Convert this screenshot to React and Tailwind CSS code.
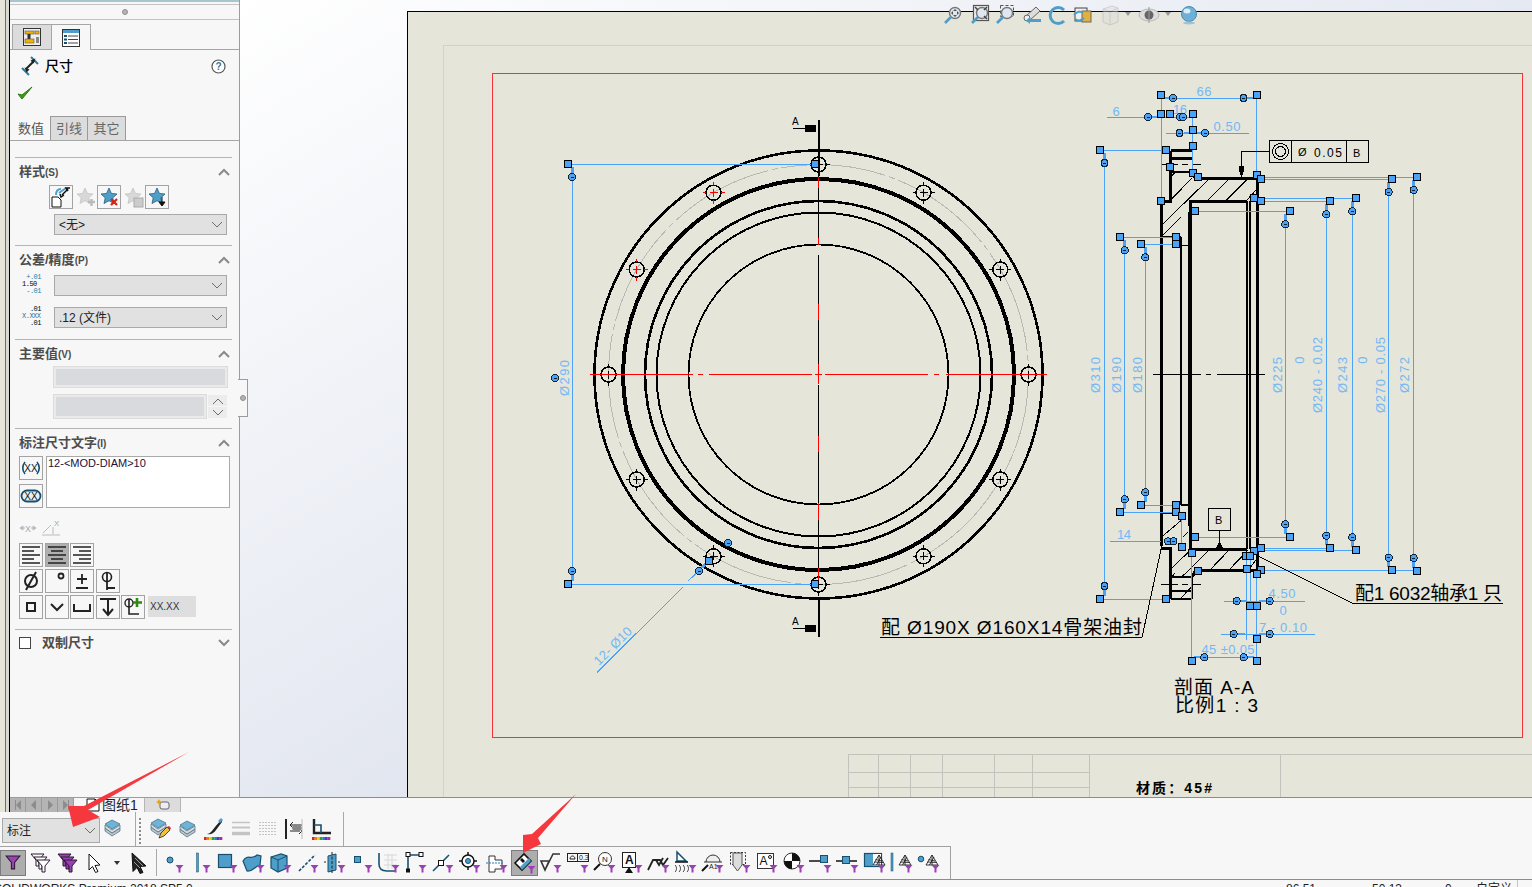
import React from 'react';

const SANS = "font-['Liberation_Sans','Noto_Sans_CJK_SC',sans-serif]";
const B = '#4f9ec9';
const D = '#17506f';
const P = '#9b3fb5';
const DIM = '#4aa3f7';

// ---------- drawing helpers (page coordinates) ----------
const Sq = ({ x, y }) => <rect x={x - 3.5} y={y - 3.5} width="7" height="7" fill="#4aa3f7" stroke="#000" strokeWidth="1" />;
const Rd = ({ x, y }) => (
  <g>
    <circle cx={x} cy={y} r="3.5" fill="#4aa3f7" stroke="#123" strokeWidth="1" />
    <line x1={x - 1.5} y1={y} x2={x + 1.5} y2={y} stroke="#123" strokeWidth="1" />
  </g>
);
const L = ({ d, w = 1, c = '#000' }) => <path d={d} fill="none" stroke={c} strokeWidth={w} />;
const DimLine = ({ d, w = 1 }) => <path d={d} fill="none" stroke={DIM} strokeWidth={w} />;
const DimText = ({ x, y, r, len, children }) => (
  <text
    x={x}
    y={y}
    textAnchor="middle"
    textLength={len}
    transform={r ? `rotate(${r} ${x} ${y})` : undefined}
    className="fill-[#74b8f5] text-[13px] font-['Liberation_Sans',sans-serif]"
  >
    {children}
  </text>
);
const Note = ({ x, y, len, size = 19, children }) => (
  <text x={x} y={y} textLength={len} className="fill-black font-['Liberation_Sans','Noto_Sans_CJK_SC',sans-serif]" fontSize={size}>
    {children}
  </text>
);

const CX = 818.5;
const CY = 374.5;
const holes = Array.from({ length: 12 }, (_, i) => {
  const a = (i * 30 * Math.PI) / 180;
  return { x: CX + 210 * Math.cos(a), y: CY + 210 * Math.sin(a), red: i === 7 || i === 8 };
});

function Hole({ x, y, red }) {
  const c = red ? '#f00' : '#000';
  return (
    <g>
      <circle cx={x} cy={y} r="7.5" fill="none" stroke="#000" strokeWidth="1.6" />
      <L c={c} d={`M${x - 11} ${y}h3.5M${x + 7.5} ${y}h3.5M${x} ${y - 11}v3.5M${x} ${y + 7.5}v3.5M${x - 4} ${y}h8M${x} ${y - 4}v8`} />
    </g>
  );
}

function Drawing() {
  const squares = [
    [568, 164], [815, 164], [568, 584], [815, 584], [709, 561],
    [1160.5, 94.5], [1256.5, 94.5], [1160.5, 113.5], [1169.5, 113.5], [1192.5, 113.5], [1192.5, 129.5], [1192.5, 146],
    [1165.5, 150], [1099.5, 150], [1169.5, 167], [1192.5, 173], [1197.5, 177], [1256.5, 175], [1260.5, 179],
    [1392.3, 179.3], [1417.3, 177.3], [1330.3, 201.3], [1356, 198.3], [1260.5, 201], [1254.3, 198.3],
    [1290.3, 211.3], [1195.3, 211.3], [1120.3, 237.3], [1141.3, 244.3], [1176.3, 237.3], [1176.3, 244.3], [1160.5, 201],
    [1176.3, 505.3], [1176.3, 512.3], [1120.3, 512.3], [1141.3, 505.3], [1181.5, 516], [1181.5, 546.5], [1195.3, 537.3], [1290.3, 537.3],
    [1330.3, 548.3], [1356.3, 550.3], [1260.5, 548.3], [1254.3, 551], [1245.5, 555.5], [1249.5, 555.5], [1191.5, 553.3],
    [1246.5, 569], [1197.5, 571.3], [1260.5, 570.3], [1256.5, 574.3], [1392.3, 570.3], [1417.3, 571.3],
    [1165.5, 599], [1099.5, 599], [1249.5, 605.5], [1256.5, 605.5], [1256.5, 638.5], [1191.5, 661], [1256.5, 661],
  ];
  const rounds = [
    [572, 177], [572, 571], [555, 378], [699, 571], [728, 543],
    [1173, 98], [1243.5, 98], [1148, 117], [1180, 117], [1183, 117], [1179.5, 133], [1205, 133],
    [1104.5, 163], [1104.5, 586], [1124.7, 250.3], [1124.7, 499.3], [1145.3, 257.3], [1145.3, 492.3],
    [1285.3, 224.3], [1285.3, 524.3], [1326.3, 214.3], [1326.3, 535.7], [1352.3, 211.3], [1352.3, 537.3],
    [1388.7, 192], [1388.7, 557.7], [1413.7, 190], [1413.7, 558],
    [1168, 541.3], [1173.5, 541.3], [1236.7, 601], [1269.7, 601], [1233.7, 634], [1269.7, 634], [1204.3, 657.3], [1243.7, 657.3],
  ];
  return (
    <svg width="1124" height="785" viewBox="408 12 1124 785" shapeRendering="crispEdges" className="block">
      {/* sheet frame and title block */}
      <L c="#d2d2ca" d="M443 797V45.5H1532" />
      <rect x="492.5" y="73.5" width="1030" height="664" fill="none" stroke="#f4343a" />
      <L c="#c3c3bd" d="M848.5 797V754.5H1532M848.5 772.5H1089M848.5 787.5H1089M878.5 754.5V797M910.5 754.5V797M942.5 754.5V797M994.5 754.5V797M1032.5 754.5V797M1089.5 754.5V797M1280.5 754.5V797" />
      <text x="1136" y="793" textLength="76" className="fill-black text-[14px] font-bold font-['Liberation_Sans','Noto_Sans_CJK_SC',sans-serif]">材质：45#</text>

      {/* front view */}
      <circle cx={CX} cy={CY} r="224" fill="none" stroke="#000" strokeWidth="2.6" />
      <circle cx={CX} cy={CY} r="210" fill="none" stroke="#b9b9b2" strokeWidth="1" strokeDasharray="105 4 6 4" />
      <circle cx={CX} cy={CY} r="195.5" fill="none" stroke="#000" strokeWidth="4" />
      <circle cx={CX} cy={CY} r="173.5" fill="none" stroke="#000" strokeWidth="2.6" />
      <circle cx={CX} cy={CY} r="162" fill="none" stroke="#000" strokeWidth="2" />
      <circle cx={CX} cy={CY} r="130" fill="none" stroke="#000" strokeWidth="1.8" />
      {holes.map((h, i) => <Hole key={i} {...h} />)}
      <L w="2" d="M818.5 120V176M818.5 600V637" />
      <L w="1" d="M818.5 176V238M818.5 255V304M818.5 320V364M818.5 385V436M818.5 452V503M818.5 520V568" />
      <L w="1" c="#f00" d="M590 374.5H693M698 374.5H703M709 374.5H812M815 374.5H822M825 374.5H928M934 374.5H939M946 374.5H1047" />
      <L w="1" c="#f00" d="M818.5 177V188M818.5 238V245M818.5 304V320M818.5 364V384M818.5 436V452M818.5 503V520M818.5 568V580" />
      <L d="M793 128.5H805M793 628.5H805" />
      <path d="M805 125h11v7h-11zM805 625h11v7h-11z" fill="#000" />
      <text x="792" y="125" className="fill-black text-[10px] font-['Liberation_Sans',sans-serif]">A</text>
      <text x="792" y="625" className="fill-black text-[10px] font-['Liberation_Sans',sans-serif]">A</text>

      {/* front view dimensions */}
      <DimLine d="M568 164.5H815M572.5 177V572M568 584.5H815" />
      <DimLine d="M597 672.5L683 587M688 581L700 570" />
      <DimLine w="2.5" d="M572.5 167V174M572.5 574V581M701 568L707 563" />
      <DimText x="569" y="378" r="-90" len="36">Ø290</DimText>
      <DimText x="616" y="649" r="-45" len="48">12- Ø10</DimText>

      {/* section view outline */}
      <L w="3" d="M1192.5 171.5L1195.5 178.5H1257V570.5H1195.5L1192.5 577M1161.5 546V201.5H1170.5V150.5M1170.5 599V548H1161.5" />
      <L w="2.5" d="M1170.5 150.5H1192M1170.5 158.5H1192M1170.5 172H1192M1170.5 577H1192M1170.5 591H1192M1170.5 599H1192" />
      <L w="1" d="M1192.5 150V172M1192.5 577V599" />
      <L w="3" d="M1190.5 549V201H1247M1190.5 549H1247" />
      <L w="2" d="M1246.5 201V549M1250 201V549M1181 237V505M1188.5 212V526M1188.5 212H1191M1181 505H1189" />
      <L w="1.5" d="M1162 236.5H1181M1181 245.5H1188M1162 513H1181" />
      <L d="M1170.7 200L1191.7 178.3M1161.7 225L1208 180M1208 200L1228 180M1226.7 200L1246.7 180M1161.7 206.7L1167.3 200.7M1170.7 176.7L1175 172.7M1163 235L1181 217M1247 200L1256 190" />
      <L d="M1170.7 569L1191.7 549M1182 576.7L1209 550M1210 570L1229 550M1229 570L1248 550M1163 535.7L1181.7 520M1183 537L1188 532M1180 599L1191.7 586.7M1172 577L1175 573M1250 568L1256 560" />
      <L d="M1153 374.5H1201M1206 374.5H1211M1217 374.5H1265M1161 164.5H1178M1182 164.5H1188M1192 164.5H1201M1161 584.5H1178M1182 584.5H1188M1192 584.5H1201" />

      {/* section view dimensions */}
      <DimLine d="M1161 94V200M1256.5 94V178M1161 98.5H1257M1107 117.5H1193M1166 133.5H1249M1192.5 113V172" />
      <DimLine d="M1100 150.5H1165M1104.5 163V586M1100 599.5H1165" />
      <DimLine d="M1260 177.5H1417M1260 179.5H1392M1388.5 192V558M1413.5 190V558M1260 570.5H1417" />
      <DimLine d="M1254 198.5H1356M1260 201.5H1330M1326.5 214V536M1352.5 211V537M1254 548.5H1330M1254 550.5H1356" />
      <DimLine d="M1195 211.5H1290M1285.5 224V524M1195 537.5H1290" />
      <DimLine d="M1120 237.5H1176M1124.5 250V499M1120 512.5H1176M1141 244.5H1176M1145.5 257V492M1141 505.5H1176" />
      <DimLine d="M1110 541.5H1161M1181.5 516V546M1191.5 553V661M1191.5 657.5H1256M1256.5 574V660" />
      <DimLine d="M1224 601.5H1305M1221 634.5H1315M1246.5 555V605M1250.5 555V605M1246.5 610V640" />
      <DimLine w="2.5" d="M1163 98H1170M1247 98H1254M1152 117H1158M1184 133H1190M1195 133H1201M1104.5 153V160M1124.5 240V247M1145.5 247V254M1285.5 214V221M1326.5 204V211M1352.5 201V208M1388.5 182V189M1413.5 180V187M1104.5 589V596M1124.5 502V509M1145.5 495V502M1285.5 527V534M1326.5 538V545M1352.5 540V547M1388.5 560V567M1413.5 561V568M1240 601H1247M1259 601H1266M1237 634H1245M1259 634H1266M1194 657H1201M1247 657H1254" />
      <DimText x="1204" y="96" len="15">66</DimText>
      <DimText x="1116" y="116" len="7">6</DimText>
      <DimText x="1180" y="114" len="14">16</DimText>
      <DimText x="1227" y="131" len="27">0.50</DimText>
      <DimText x="1124" y="539" len="14">14</DimText>
      <DimText x="1282" y="598" len="27">4.50</DimText>
      <DimText x="1283" y="615" len="7">0</DimText>
      <DimText x="1283" y="632" len="48">7 - 0.10</DimText>
      <DimText x="1228" y="654" len="53">45 ±0.05</DimText>
      <DimText x="1100" y="375" r="-90" len="36">Ø310</DimText>
      <DimText x="1121" y="375" r="-90" len="36">Ø190</DimText>
      <DimText x="1142" y="375" r="-90" len="36">Ø180</DimText>
      <DimText x="1282" y="375" r="-90" len="36">Ø225</DimText>
      <DimText x="1304" y="360" r="-90" len="7">0</DimText>
      <DimText x="1322" y="375" r="-90" len="76">Ø240 - 0.02</DimText>
      <DimText x="1347" y="375" r="-90" len="36">Ø243</DimText>
      <DimText x="1367" y="360" r="-90" len="7">0</DimText>
      <DimText x="1385" y="375" r="-90" len="76">Ø270 - 0.05</DimText>
      <DimText x="1409" y="375" r="-90" len="36">Ø272</DimText>

      {/* tolerance frame and datum */}
      <rect x="1269.5" y="140.5" width="99" height="22" fill="none" stroke="#000" />
      <L d="M1291.5 140.5V162.5M1346.5 140.5V162.5M1269 151.5H1241.5V178" />
      <circle cx="1280.5" cy="151.5" r="8" fill="none" stroke="#000" />
      <circle cx="1280.5" cy="151.5" r="5" fill="none" stroke="#000" />
      <path d="M1239 166h5v3l-1 6h-3l-1-6z" fill="#000" />
      <text x="1298" y="156" className="fill-black text-[11px] font-['Liberation_Sans',sans-serif]">Ø</text>
      <text x="1314" y="156.5" textLength="28" className="fill-black text-[12px] font-['Liberation_Sans',sans-serif]">0.05</text>
      <text x="1353" y="157" className="fill-black text-[11px] font-['Liberation_Sans',sans-serif]">B</text>
      <rect x="1208.5" y="508.5" width="22" height="22" fill="none" stroke="#000" />
      <text x="1215" y="524" className="fill-black text-[11px] font-['Liberation_Sans',sans-serif]">B</text>
      <L d="M1219.5 530V541" />
      <path d="M1219.5 541l4 8h-8z" fill="#000" />

      {/* notes */}
      <Note x="1355" y="600" len="147">配1 6032轴承1 只</Note>
      <L d="M1353 603.5H1503M1353 603.5L1258 556" />
      <Note x="881" y="634" len="261">配 Ø190X Ø160X14骨架油封</Note>
      <L d="M880 637.5H1142L1162 545" />
      <Note x="1174" y="694" len="80">剖面 A-A</Note>
      <Note x="1175" y="712" len="83">比例1 : 3</Note>

      {rounds.map(([x, y], i) => <Rd key={i} x={x} y={y} />)}
      {squares.map(([x, y], i) => <Sq key={i} x={x} y={y} />)}
    </svg>
  );
}

// ---------- small ui helpers ----------
const Chev = ({ up, thin }) => (
  <svg width="12" height="8" viewBox="0 0 12 8">
    <path d={up ? 'M1 7l5-5 5 5' : 'M1 1l5 5 5-5'} fill="none" stroke={thin ? '#6b6b6b' : '#8a8a8a'} strokeWidth={thin ? 1 : 2} />
  </svg>
);

const Star = ({ x = 3, y = 2, fill = B, stroke = D }) => (
  <path transform={`translate(${x} ${y})`} d="M8 0l2.4 5.4 5.6.6-4.2 3.8 1.2 5.7L8 12.7 3 15.5l1.2-5.7L0 6l5.6-.6z" fill={fill} stroke={stroke} strokeWidth="0.7" />
);

const BtnBox = ({ className = '', active, children }) => (
  <div className={`w-6 h-6 shrink-0 flex items-center justify-center border border-[#a3a3a3] ${active ? 'bg-[#b0b0b0]' : ''} ${className}`}>
    <svg width="22" height="22" viewBox="0 0 22 22">{children}</svg>
  </div>
);

const Bare = ({ children }) => (
  <div className="w-6 h-6 shrink-0 flex items-center justify-center">
    <svg width="22" height="22" viewBox="0 0 22 22">{children}</svg>
  </div>
);

const Select = ({ children, className = '' }) => (
  <div className={`ml-[39px] w-[173px] h-[21px] bg-[#e1e1e1] border border-[#a9a9a9] flex items-center justify-between pl-1 pr-[3px] text-[12px] text-[#222] ${className}`}>
    <span>{children}</span>
    <Chev thin />
  </div>
);

function Section({ title, hot, up = true, children }) {
  return (
    <div className="border-t border-[#b4b4b4]">
      <div className="h-[27px] pl-1 pr-[2px] flex items-center justify-between">
        <span className="text-[13px] font-bold text-[#4c4c4c]">{title}<span className="text-[10px]">{hot}</span></span>
        <Chev up={up} />
      </div>
      {children}
    </div>
  );
}

const Ic = ({ w = 27, children }) => (
  <svg width={w} height="26" viewBox={`0 0 ${w} 26`} className="block shrink-0">{children}</svg>
);

const F = () => <path d="M15.5 15h8l-3 3.5v4h-2v-4z" fill={P} />;
const Mesh = ({ x = 0, y = 0 }) => (
  <g transform={`translate(${x} ${y})`} fill="none" stroke="#222" strokeWidth="0.9">
    <path d="M9 2l6 10H3zM5.5 6.5l6.5 1.5M4.5 9l9 .5M9 2v10M6.5 12L11 4" />
  </g>
);

function Funnel({ x = 0, y = 0, fill = P }) {
  return <path transform={`translate(${x} ${y})`} d="M0 0h13l-5 6v6H5V6z" fill={fill} stroke="#2a1a30" strokeWidth="1" />;
}

const filterIcons = [
  <g key="0"><circle cx="10" cy="10" r="3" fill={B} stroke={D} /><F /></g>,
  <g key="1"><rect x="9.5" y="3" width="2" height="19" fill={B} stroke={D} strokeWidth="0.5" /><F /></g>,
  <g key="2"><rect x="4.5" y="4.5" width="13" height="13" fill={B} stroke={D} strokeWidth="1.2" /><F /></g>,
  <g key="3"><path d="M2 11c5-8 8 0 14-6l4 1-1 9c-5 1-7 7-13 6z" fill={B} stroke={D} strokeWidth="1.2" /><F /></g>,
  <g key="4"><path d="M3 7l10-3 6 2v12l-9 4-7-4z" fill={B} stroke={D} strokeWidth="1.2" /><path d="M3 7l7 3 9-4M10 10v12" fill="none" stroke={D} /><F /></g>,
  <g key="5"><path d="M4 21L20 5" stroke={D} strokeWidth="1.6" strokeDasharray="3 1.5" /><F /></g>,
  <g key="6"><path d="M6 6l8-2v16l-8 2z" fill={B} stroke={D} /><path d="M10 2v22M2 12h2M16 12h2" stroke="#222" strokeDasharray="3 1.5" /><F /></g>,
  <g key="7"><rect x="5.5" y="6.5" width="6" height="6" fill={B} stroke={D} /><F /></g>,
  <g key="8"><path d="M8 5h13M8 10h13M8 15h13M12 4v15M16 4v15" stroke="#d8d8d8" /><path d="M3 3v11c0 5 3 7 8 7h8" fill="none" stroke={D} strokeWidth="1.6" /><F /></g>,
  <g key="9"><path d="M5 5v15M5 5h13" stroke={D} strokeWidth="1.6" /><rect x="3" y="2.5" width="4" height="4" fill="#fff" stroke="#111" /><rect x="16" y="2.5" width="4" height="4" fill="#fff" stroke="#111" /><rect x="3" y="18.5" width="4" height="4" fill="#111" /><F /></g>,
  <g key="10"><path d="M3 21L19 5" stroke={D} strokeWidth="1.6" /><rect x="8.5" y="10.5" width="5" height="5" fill="#fff" stroke="#111" /><F /></g>,
  <g key="11"><circle cx="11" cy="11" r="6" fill="#fff" stroke="#111" strokeWidth="1.5" /><circle cx="11" cy="11" r="2.5" fill={B} stroke={D} /><path d="M2 11h3M17 11h3M11 2v3M11 17v3" stroke="#111" strokeWidth="1.5" /><F /></g>,
  <g key="12"><path d="M5 6h6v4h7v9h-7v3H5z" fill="#fff" stroke="#333" /><path d="M2 13h18" stroke="#1f7fc0" strokeDasharray="2 1" /><F /></g>,
  <g key="13"><path d="M3 12l9-9 7 7-9 9z" fill="#fff" stroke="#111" strokeWidth="1.6" /><path d="M8 16l9-9 2 3-9 9z" fill={B} /><path d="M8 9l2-2 3 3-2 2z" fill="#111" /><F /></g>,
  <g key="14"><path d="M3 11h8l-4 9zM7 20l8-16h7" fill="none" stroke="#333" strokeWidth="1.6" /><F /></g>,
  <g key="15"><rect x="2.5" y="3.5" width="21" height="8" fill="none" stroke="#222" /><path d="M12.5 3.5v8" stroke="#222" /><path d="M5 9c0-4 5-4 5 0z" fill="none" stroke="#222" /><text x="14" y="10" className="text-[7px] font-['Liberation_Sans',sans-serif]" fill="#222">0.3</text><F /></g>,
  <g key="16"><circle cx="13" cy="9" r="6.5" fill="#fff" stroke="#333" /><path d="M8 14l-6 6" stroke="#111" strokeWidth="2" /><text x="10" y="12" className="text-[8px] font-['Liberation_Sans',sans-serif]" fill="#222">N</text><F /></g>,
  <g key="17"><rect x="3.5" y="2.5" width="13" height="15" fill="#fff" stroke="#222" /><text x="6" y="14" className="text-[12px] font-bold font-['Liberation_Sans',sans-serif]" fill="#111">A</text><path d="M10 17l4 6H6z" fill="#111" /><F /></g>,
  <g key="18"><path d="M2 20l5-10h7l3 5 5-7M10 10l3 5 4-7" fill="none" stroke="#222" strokeWidth="1.8" /><F /></g>,
  <g key="19"><path d="M4 2v9h9z" fill="#fff" stroke={D} strokeWidth="1.5" /><path d="M2 12h13" stroke="#111" strokeWidth="1.5" /><path d="M2 15c2 2 2 5 0 7M6 15c2 2 2 5 0 7M10 15c2 2 2 5 0 7M14 15c2 2 2 5 0 7" fill="none" stroke="#333" /><F /></g>,
  <g key="20"><path d="M6 12a7 7 0 0114 0" fill="#eee" stroke="#333" /><path d="M8 15l-6 6" stroke="#111" strokeWidth="2" /><path d="M4 12h18" stroke="#333" /><text x="9" y="19" className="text-[7px] font-['Liberation_Sans',sans-serif]" fill="#222">A1</text><F /></g>,
  <g key="21"><rect x="3.5" y="2.5" width="15" height="12" fill="none" stroke="#333" strokeDasharray="2 1.5" /><path d="M6 3h9v12l-4.5 6L6 15z" fill="#ddd" stroke="#555" /><F /></g>,
  <g key="22"><rect x="3.5" y="3.5" width="16" height="15" fill="#fff" stroke="#333" /><text x="5.5" y="15" className="text-[12px] font-['Liberation_Sans',sans-serif]" fill="#111">A</text><circle cx="16" cy="7" r="1.5" fill="none" stroke="#111" /><F /></g>,
  <g key="23"><circle cx="11" cy="11" r="8" fill="#fff" stroke="#333" /><path d="M11 11V3a8 8 0 018 8zM11 11v8a8 8 0 01-8-8z" fill="#111" /><F /></g>,
  <g key="24"><path d="M1 11h12" stroke="#111" strokeWidth="1.5" /><rect x="12.5" y="5.5" width="7" height="7" fill={B} stroke={D} /><F /></g>,
  <g key="25"><path d="M1 11h21" stroke="#111" strokeWidth="1.5" /><rect x="7.5" y="6.5" width="7" height="7" fill={B} stroke={D} /><F /></g>,
  <g key="26"><rect x="2.5" y="3.5" width="17" height="13" fill={B} stroke={D} strokeWidth="1.2" /><rect x="11" y="4" width="8" height="12" fill="#fff" /><Mesh x="8" y="3" /><F /></g>,
  <g key="27"><rect x="2" y="3" width="2" height="18" fill={B} stroke={D} strokeWidth="0.5" /><Mesh x="7" y="3" /><F /></g>,
  <g key="28"><circle cx="5" cy="9" r="2.8" fill={B} stroke={D} /><Mesh x="7" y="3" /><F /></g>,
];

const Rainbow = ({ y = 21 }) => (
  <g>
    {['#e02020', '#f08000', '#f0d000', '#30a030', '#2080d0', '#6030c0', '#a030a0'].map((c, i) => (
      <rect key={c} x={4 + i * 2.6} y={y} width="2.7" height="3" fill={c} />
    ))}
  </g>
);

const Layers = ({ x = 7, y = 5 }) => (
  <g transform={`translate(${x} ${y})`} stroke="#3a6a85" strokeWidth="0.7">
    <path d="M0 8l7 5 8-5v3l-8 5-7-5z" fill="#c4c4c4" />
    <path d="M0 5l7 5 8-5v3l-8 5-7-5z" fill="#dcdcdc" />
    <path d="M0 4l7-4 8 4-8 5z" fill="#6db4d8" />
  </g>
);

const layerIcons = [
  <g key="a"><Layers x="5" y="3" /><path d="M13 22l2-5 6-6 3 3-6 6z" fill="#f0c040" stroke="#222" strokeWidth="0.8" /><path d="M21 11l3 3 1-2-2-2z" fill="#d03030" /></g>,
  <Layers key="b" />,
  <g key="c"><path d="M7 18c3 0 5-3 8-7l6-7c1 0 1 1 1 2l-6 8c-2 3-5 5-9 4z" fill="#222" /><path d="M18 5l3-3 2 2-3 3z" fill={B} /><Rainbow /></g>,
  <g key="d" stroke="#c4c4c4"><path d="M5 6.5h18" strokeWidth="1.5" /><path d="M5 11.5h18" strokeWidth="2" /><path d="M5 17.5h18" strokeWidth="3.5" /></g>,
  <g key="e" stroke="#c4c4c4" strokeDasharray="2 1"><path d="M5 6.5h18M5 9.5h18M5 12.5h18M5 15.5h18M5 18.5h18" strokeWidth="1.2" /></g>,
  <g key="f"><path d="M5 3v20" stroke="#222" strokeWidth="2" /><path d="M9 9h12M9 15h10" stroke="#222" /><path d="M12 6l-3 3 3 3M18 12l3 3-3 3" fill="none" stroke="#222" /><ellipse cx="16" cy="12" rx="5" ry="3.5" fill="#888" /><path d="M21 3v20" stroke="#bbb" /></g>,
  <g key="g"><path d="M6 3v14h17" fill="none" stroke="#222" strokeWidth="2.4" /><path d="M6 9h7v8" fill="none" stroke={D} strokeWidth="1.6" /><Rainbow /></g>,
];

const viewIcons = [
  [953, 'zoomfit'], [980, 'zoomall'], [1005, 'zoomarea'], [1032, 'prev'], [1057, 'rotate'], [1083, 'section'], [1110, 'cube'],
  [1149, 'eye'], [1189, 'globe'],
];

function ViewIcon({ kind }) {
  const glass = <g><circle cx="13" cy="9" r="5.5" fill="#dfe7ee" stroke="#777" strokeWidth="1.4" /><path d="M9 13l-6 6" stroke={B} strokeWidth="2.6" /></g>;
  if (kind === 'zoomfit') return <g>{glass}<path d="M13 5l-2 2h4zM13 13l-2-2h4zM9 9l2-2v4zM17 9l-2-2v4z" fill="#555" /></g>;
  if (kind === 'zoomall') return <g><rect x="4.5" y="1.5" width="15" height="15" fill="#eee" stroke="#555" strokeWidth="1.2" />{glass}<path d="M6 3l3 3M18 3l-3 3M18 15l-3-3" stroke="#444" strokeWidth="1.5" /></g>;
  if (kind === 'zoomarea') return <g><rect x="6.5" y="1.5" width="13" height="11" fill="none" stroke="#555" strokeDasharray="3 2" />{glass}</g>;
  if (kind === 'prev') return <g><path d="M5 12l10-9 4 4-10 9z" fill="#ddd" stroke="#666" /><circle cx="6" cy="14" r="3" fill="#eee" stroke="#666" /><path d="M9 15h11v3H9v2l-4-3.5L9 13z" fill={B} /></g>;
  if (kind === 'rotate') return <path d="M18 6a8 8 0 100 11" fill="none" stroke={B} strokeWidth="3" />;
  if (kind === 'section') return <g><rect x="3" y="4" width="12" height="13" fill="#eee" stroke="#444" /><rect x="10" y="7" width="9" height="11" fill="#e0b040" stroke="#765" /><path d="M2 11c3-4 7-4 9-2M12 14c-3 3-7 3-9 1" fill="none" stroke={B} strokeWidth="2" /></g>;
  if (kind === 'cube') return <g opacity="0.45"><path d="M4 5l9-3 6 2v14l-8 3-7-3z" fill="#ddd" stroke="#aaa" /><path d="M4 5l7 3 8-4M11 8v13" fill="none" stroke="#aaa" /></g>;
  if (kind === 'eye') return <g><ellipse cx="11" cy="11" rx="10" ry="6" fill="#ddd" stroke="#bbb" /><circle cx="11" cy="11" r="4.5" fill="#666" /><path d="M11 3v16" stroke="#999" /></g>;
  return <g><circle cx="11" cy="10" r="7.5" fill="#6fb0d8" stroke="#4a8cb0" /><ellipse cx="9" cy="7" rx="3.5" ry="2.5" fill="#dcecf5" /><ellipse cx="11" cy="19" rx="6" ry="1.5" fill="#a5c0d0" /></g>;
}

const Strip = () => (
  <div className="w-[10px] shrink-0 h-full flex">
    <div className="w-[5px] bg-[#e5e5d9]" />
    <div className="w-px bg-[#6e6e6e]" />
    <div className="w-[3px] bg-[#d9d9d2]" />
    <div className="w-px bg-black" />
  </div>
);

const NavBtn = ({ d }) => (
  <div className="w-4 h-[14px] bg-[#b4b4b4] border-r border-[#9a9a9a] flex items-center justify-center">
    <svg width="10" height="10" viewBox="0 0 10 10"><path d={d} fill="#8c8c8c" /></svg>
  </div>
);

function Panel() {
  return (
    <aside className="w-[230px] shrink-0 h-full bg-[#f7f7f7] border-r border-b border-[#9c9c9c] flex flex-col relative z-10">
      <div className="h-[2px] bg-[#a8c6ce]" />
      <div className="h-[3px] border-b border-[#c4c4c4]" />
      <div className="h-[15px] border-b border-[#c4c4c4] flex items-center justify-center">
        <div className="w-[6px] h-[6px] rounded-full bg-[#b4b4b4] border border-[#8f8f8f]" />
      </div>
      {/* property tabs */}
      <div className="h-[30px] border-b border-[#a6a6a6] flex items-end pl-[2px]">
        <div className="w-[39px] h-[25px] bg-[#dcdcdc] border-t border-l border-[#a6a6a6] flex items-center justify-center">
          <svg width="18" height="18" viewBox="0 0 18 18">
            <rect x="0.5" y="0.5" width="17" height="17" fill="#eee" stroke="#333" />
            <rect x="2" y="3" width="9" height="3" fill="#f0b400" stroke="#654" strokeWidth="0.6" />
            <rect x="12" y="3" width="4" height="3" fill="#f0b400" stroke="#654" strokeWidth="0.6" />
            <path d="M6 6v5" stroke="#333" strokeWidth="3" />
            <rect x="2" y="11" width="9" height="4" fill="#f0b400" stroke="#654" strokeWidth="0.6" />
            <rect x="13" y="9" width="3" height="6" fill="#888" />
          </svg>
        </div>
        <div className="w-[40px] h-[26px] -mb-px bg-[#f7f7f7] border-t border-l border-r border-[#a6a6a6] flex items-center justify-center">
          <svg width="18" height="18" viewBox="0 0 18 18">
            <rect x="0.5" y="0.5" width="17" height="17" fill="#fff" stroke="#333" />
            <rect x="1" y="1" width="16" height="3" fill={B} />
            <path d="M6 7h10M6 10.5h10M6 14h10" stroke="#444" />
            <rect x="2" y="6" width="3" height="2" fill={D} /><rect x="2" y="9.5" width="3" height="2" fill={D} /><rect x="2" y="13" width="3" height="2" fill={D} />
          </svg>
        </div>
      </div>
      {/* title */}
      <div className="mt-[6px] h-[20px] pl-[11px] pr-[13px] flex items-center justify-between">
        <div className="flex items-center gap-[6px]">
          <svg width="18" height="20" viewBox="0 0 18 20">
            <path d="M1 12l7 7M10 1l7 7" stroke="#2d7aa0" strokeWidth="2" />
            <path d="M5 13L13 5" stroke="#222" strokeWidth="2" />
            <path d="M3.5 11.5l2 5 3-3zM14.5 2.5l-5 2 3 3z" fill="#222" />
          </svg>
          <span className="text-[14px] font-medium text-black">尺寸</span>
        </div>
        <svg width="15" height="15" viewBox="0 0 15 15">
          <circle cx="7.5" cy="7.5" r="6.5" fill="#fff" stroke="#555" strokeWidth="1.2" />
          <text x="7.5" y="11" textAnchor="middle" className="text-[10px] font-bold font-['Liberation_Sans',sans-serif]" fill="#2d7aa0">?</text>
        </svg>
      </div>
      <div className="mt-[8px] h-[18px] pl-[7px] flex items-center">
        <svg width="16" height="14" viewBox="0 0 16 14"><path d="M1 8l4 5L15 1 5 9z" fill="#3f9a18" stroke="#2d7a10" strokeWidth="1" /></svg>
      </div>
      {/* sub tabs */}
      <div className="mt-[14px] h-[25px] border-b border-[#a6a6a6] flex pl-[2px] text-[13px] leading-none">
        <div className="w-[38px] flex items-center justify-center text-[#555]">数值</div>
        <div className="w-[38px] bg-[#dcdcdc] border border-b-0 border-[#9a9a9a] flex items-center justify-center text-[#666]">引线</div>
        <div className="w-[38px] bg-[#dcdcdc] border border-l-0 border-b-0 border-[#9a9a9a] flex items-center justify-center text-[#666]">其它</div>
      </div>

      <div className="mt-[16px] ml-[5px] w-[217px]">
        <Section title="样式" hot="(S)">
          <div className="ml-[34px] flex h-6">
            <BtnBox>
              <path d="M2 11h6l3 3v7H2z" fill="#fff" stroke="#111" />
              <path d="M9 7l7-5M6 9c0-4 2-6 5-6" fill="none" stroke={B} strokeWidth="2" />
              <path d="M12 9l6-6M10 8l1 3 3-2M20 2l-4 0 2 3" fill="none" stroke="#111" strokeWidth="1.5" />
            </BtnBox>
            <Bare><Star fill="#d8d8d8" stroke="#c0c0c0" /><path d="M14 16h7M17.5 13v7" stroke="#bbb" strokeWidth="2.4" /></Bare>
            <BtnBox><Star /><path d="M13 13l6 6M19 13l-6 6" stroke="#d82010" strokeWidth="2.2" /></BtnBox>
            <Bare><Star fill="#d8d8d8" stroke="#c0c0c0" /><rect x="12" y="12" width="9" height="9" fill="#ccc" stroke="#aaa" /></Bare>
            <BtnBox><Star /><path d="M16 11v6M13 16h6l-3 4z" fill="#111" stroke="#111" /></BtnBox>
          </div>
          <Select className="mt-[5px] mb-[10px]">&lt;无&gt;</Select>
        </Section>
        <Section title="公差/精度" hot="(P)">
          <div className="mt-[2px] flex items-center h-[21px] relative">
            <div className="absolute left-[7px] -top-px w-[19px] text-[7px] leading-[7px] tracking-[-0.5px] font-['Liberation_Mono',monospace]">
              <div className="text-[#2d7aa0] text-right">+.01</div><div className="text-left">1.50</div><div className="text-[#2d7aa0] text-right">-.01</div>
            </div>
            <Select />
          </div>
          <div className="mt-[11px] mb-[11px] flex items-center h-[21px] relative">
            <div className="absolute left-[7px] -top-px w-[19px] text-[7px] leading-[7px] tracking-[-0.5px] font-['Liberation_Mono',monospace]">
              <div className="text-right">.01</div><div className="text-left text-[#2d7aa0]">X.XXX</div><div className="text-right">.01</div>
            </div>
            <Select>.12 (文件)</Select>
          </div>
        </Section>
        <Section title="主要值" hot="(V)">
          <div className="ml-[39px] w-[173px] h-5 bg-[#d8dadd] border-2 border-[#eaeaea] outline outline-[#dcdcdc]" />
          <div className="mt-2 mb-[10px] ml-[39px] flex h-[23px]">
            <div className="w-[152px] bg-[#d8dadd] border-2 border-[#eaeaea] outline outline-[#dcdcdc]" />
            <div className="ml-[2px] w-[19px] flex flex-col gap-px">
              <div className="flex-1 bg-[#ececec] flex items-center justify-center"><Chev up thin /></div>
              <div className="flex-1 bg-[#ececec] flex items-center justify-center"><Chev thin /></div>
            </div>
          </div>
        </Section>
        <Section title="标注尺寸文字" hot="(I)">
          <div className="ml-[4px] flex gap-[3px]">
            <div className="flex flex-col gap-1">
              <BtnBox>
                <text x="11" y="15" textAnchor="middle" className="text-[10px] font-['Liberation_Sans',sans-serif]" fill="#111">XX</text>
                <path d="M5 5c-3 4-3 8 0 12M17 5c3 4 3 8 0 12" fill="none" stroke={D} strokeWidth="1.6" />
              </BtnBox>
              <BtnBox>
                <rect x="1.5" y="5.5" width="19" height="11" rx="5.5" fill="#e8f0f5" stroke={D} strokeWidth="1.8" />
                <text x="11" y="15" textAnchor="middle" className="text-[10px] font-['Liberation_Sans',sans-serif]" fill="#111">XX</text>
              </BtnBox>
            </div>
            <div className="w-[184px] h-[52px] bg-white border border-[#a9a9a9] pl-[1px] text-[11px] leading-[13px] text-[#201040]">12-&lt;MOD-DIAM&gt;10</div>
          </div>
          <div className="ml-[3px] mt-[10px] h-[24px] flex gap-[2px]">
            <svg width="20" height="20" viewBox="0 0 20 20"><path d="M2 10h16M2 10l3-2v4zM18 10l-3-2v4z" stroke="#bbb" fill="#bbb" /><rect x="7" y="6" width="6" height="8" fill="#f7f7f7" /><text x="10" y="13.5" textAnchor="middle" className="text-[9px] font-['Liberation_Sans',sans-serif]" fill="#aaa">X</text></svg>
            <svg width="22" height="20" viewBox="0 0 22 20"><path d="M2 17h18M3 15l8-8M13 16V9" stroke="#bbb" fill="none" /><text x="14" y="8" className="text-[8px] font-['Liberation_Sans',sans-serif]" fill="#aaa">X</text></svg>
          </div>
          <div className="ml-[4px] mt-[1px] flex">
            <BtnBox><path d="M2 3h18M2 7h12M2 11h18M2 15h12M2 19h18" stroke="#222" strokeWidth="1.6" /></BtnBox>
            <BtnBox className="ml-[2px]" active><path d="M2 3h18M5 7h12M2 11h18M5 15h12M2 19h18" stroke="#222" strokeWidth="1.6" /></BtnBox>
            <BtnBox className="ml-px"><path d="M2 3h18M8 7h12M2 11h18M8 15h12M2 19h18" stroke="#222" strokeWidth="1.6" /></BtnBox>
          </div>
          <div className="ml-[4px] mt-[2px] flex">
            <BtnBox><circle cx="11" cy="11" r="6" fill="none" stroke="#222" strokeWidth="2" /><path d="M6 20L16 2" stroke="#222" strokeWidth="2" /></BtnBox>
            <BtnBox className="ml-[2px]"><circle cx="15" cy="6" r="2.5" fill="none" stroke="#222" strokeWidth="1.8" /></BtnBox>
            <BtnBox className="ml-px"><path d="M11 4v10M6 9h10M5 18h12" stroke="#222" strokeWidth="1.8" /></BtnBox>
            <BtnBox className="ml-[2px]"><circle cx="10" cy="7" r="4.5" fill="none" stroke="#222" strokeWidth="1.6" /><path d="M10 2v18M10 18h8" fill="none" stroke="#222" strokeWidth="1.8" /></BtnBox>
          </div>
          <div className="ml-[4px] mt-[2px] mb-[10px] flex">
            <BtnBox><rect x="7" y="7" width="8" height="8" fill="none" stroke="#222" strokeWidth="2" /></BtnBox>
            <BtnBox className="ml-[2px]"><path d="M5 8l6 6 6-6" fill="none" stroke="#222" strokeWidth="2" /></BtnBox>
            <BtnBox className="ml-px"><path d="M3 8v7h16V8" fill="none" stroke="#222" strokeWidth="2" /></BtnBox>
            <BtnBox className="ml-[2px]"><path d="M3 3h16M11 3v16M6 13l5 6 5-6" fill="none" stroke="#222" strokeWidth="2" /></BtnBox>
            <BtnBox className="ml-px"><circle cx="7" cy="7" r="4" fill="none" stroke="#222" strokeWidth="1.4" /><path d="M7 3v15h10" fill="none" stroke="#222" strokeWidth="1.6" /><path d="M15 2v9M11 6.5h9" stroke="#2f8a10" strokeWidth="2.6" /></BtnBox>
            <div className="ml-[3px] mt-px w-12 h-[21px] bg-[#dedede] pl-[2px] text-[10px] leading-[21px] text-[#334]">XX.XX</div>
          </div>
        </Section>
        <div className="border-t border-[#b4b4b4] h-[27px] pl-1 pr-[2px] flex items-center justify-between">
          <div className="flex items-center">
            <div className="w-3 h-3 bg-white border border-[#444]" />
            <span className="ml-[11px] text-[13px] font-bold text-[#4c4c4c]">双制尺寸</span>
          </div>
          <Chev />
        </div>
      </div>
      {/* resize grip on the panel edge */}
      <div className="absolute left-[228px] top-[379px] w-[10px] h-[38px] bg-[#f7f7f7] border border-l-0 border-[#9c9c9c] flex items-center justify-center">
        <div className="w-[6px] h-[6px] rounded-full bg-[#b4b4b4] border border-[#8f8f8f]" />
      </div>
    </aside>
  );
}

export default function App() {
  return (
    <div className={`w-[1532px] h-[887px] overflow-hidden relative bg-[#f7f7f7] flex flex-col ${SANS}`}>
      <div className="h-[798px] flex shrink-0">
        <Strip />
        <Panel />
        <main className="flex-1 relative border-b border-[#8c8c8c] pl-[167px] pt-[11px] bg-linear-to-br from-white to-[#ccd3e4]">
          <div className="h-[786px] bg-[#e5e5d9] border-l border-t border-black">
            <Drawing />
          </div>
          {/* view toolbar */}
          {viewIcons.map(([x, kind]) => (
            <div key={kind} style={{ left: x - 240 - 11 }} className="absolute top-[4px] w-[22px] h-[22px]">
              <svg width="22" height="22" viewBox="0 0 22 22"><ViewIcon kind={kind} /></svg>
            </div>
          ))}
          <div className="absolute left-[885px] top-[12px] w-0 h-0 border-x-[3px] border-t-[4px] border-x-transparent border-t-[#999]" />
          <div className="absolute left-[925px] top-[12px] w-0 h-0 border-x-[3px] border-t-[4px] border-x-transparent border-t-[#999]" />
        </main>
      </div>

      {/* sheet tabs */}
      <div className="h-[14px] flex shrink-0">
        <Strip />
        <NavBtn d="M2 0h1v10H2zM8 0v10L3 5z" />
        <NavBtn d="M7 0v10L2 5z" />
        <NavBtn d="M3 0v10l5-5z" />
        <NavBtn d="M7 0h1v10H7zM2 0v10l5-5z" />
        <div className="w-[2px]" />
        <div className="w-[68px] flex items-center pl-[10px] text-[14px] leading-none text-[#223]">
          <svg width="14" height="14" viewBox="0 0 14 14" className="shrink-0"><path d="M1 1h8l4 4v8H1z" fill="#fff" stroke="#111" /><path d="M9 1v4h4" fill="none" stroke="#111" /></svg>
          <span className="ml-[2px] whitespace-nowrap">图纸1</span>
        </div>
        <div className="w-[37px] bg-[#dcdcdc] border-l border-r border-[#b5b5b5] flex items-center justify-center">
          <svg width="16" height="14" viewBox="0 0 16 14"><rect x="5" y="4" width="9" height="7" rx="2" fill="#eee" stroke="#667" /><path d="M4 1l1 2 2 1-2 1-1 2-1-2-2-1 2-1z" fill="#f0a000" /></svg>
        </div>
      </div>

      {/* layer toolbar */}
      <div className="h-[35px] w-[951px] shrink-0 flex items-start border-b border-[#a2a2a2]">
        <div className="ml-[2px] mt-[6px] w-[98px] h-[25px] bg-[#e1e1e1] border border-[#a9a9a9] flex items-center justify-between pl-1 pr-[3px] text-[12px] text-[#222]">
          <span>标注</span>
          <Chev thin />
        </div>
        <div className="mt-1"><Ic><Layers x="5" y="4" /></Ic></div>
        <div className="ml-[8px] w-px h-[34px] bg-[#a8a8a8]" />
        <div className="ml-[3px] mt-[6px] w-[2px] h-[26px] border-l-2 border-dotted border-[#8a8a8a]" />
        <div className="ml-[5px] mt-1 flex">
          {layerIcons.map((ic, i) => <Ic key={i}>{ic}</Ic>)}
        </div>
        <div className="ml-[8px] w-px h-[34px] bg-[#a8a8a8]" />
      </div>

      {/* selection filter toolbar */}
      <div className="h-[32px] w-[951px] shrink-0 flex items-start pt-[3px] border-r border-[#a2a2a2]">
        <div className="w-[26px] h-[26px] bg-[#adadad] border border-[#7c7c7c] flex items-center justify-center">
          <svg width="16" height="16" viewBox="-1 -1 15 15"><Funnel /></svg>
        </div>
        <div className="ml-px">
          <Ic><Funnel x="4" y="4" fill="#fff" /><Funnel x="7" y="7" fill="#fff" /><Funnel x="10" y="10" fill="#fff" /></Ic>
        </div>
        <Ic><Funnel x="4" y="4" /><Funnel x="7" y="7" /><Funnel x="10" y="10" /></Ic>
        <Ic><path d="M8 4l11 11-5 .5 3 6-2.5 1-3-6-3.5 3.5z" fill="#fff" stroke="#111" /></Ic>
        <div className="w-[17px] flex justify-center pt-[11px]"><div className="w-0 h-0 border-x-[3px] border-t-[4px] border-x-transparent border-t-[#333]" /></div>
        <Ic><path d="M7 3l14 13-6 .5 3 6-3 1-3-6-4 4z" fill="#222" stroke="#111" /><path d="M10 8l8 8M9 12l6 6" stroke="#999" /></Ic>
        <div className="w-[8px] flex justify-center"><div className="mt-[-1px] w-px h-[27px] bg-[#a8a8a8]" /></div>
        {filterIcons.map((ic, i) => (
          i === 13 ? (
            <div key={i} className="w-[27px] h-[26px] bg-[#adadad] border border-[#7c7c7c] shrink-0 overflow-hidden">
              <svg width="25" height="24" viewBox="0 0 25 24" className="block">{ic}</svg>
            </div>
          ) : (
            <Ic key={i}>{ic}</Ic>
          )
        ))}
      </div>

      {/* status bar, cut off by the window edge */}
      <div className="flex-1 border-t border-[#8c8c8c] relative overflow-hidden text-[12px] leading-[14px] text-[#222]">
        <span className="absolute left-[-6px] top-[2px]">SOLIDWORKS Premium 2018 SP5.0</span>
        <span className="absolute left-[1286px] top-[2px]">86.51</span>
        <span className="absolute left-[1372px] top-[2px]">50.13</span>
        <span className="absolute left-[1445px] top-[2px]">0</span>
        <span className="absolute left-[1476px] top-[2px]">自定义</span>
        <div className="absolute left-[1517px] top-0 w-px h-full bg-[#c4c4c4]" />
      </div>

      {/* red annotation arrows drawn over the screenshot */}
      <svg width="1532" height="887" viewBox="0 0 1532 887" className="absolute left-0 top-0 pointer-events-none z-20">
        <path d="M189 752L88 810L100 817L73 827L68 806L84 806Z" fill="#f6383e" />
        <path d="M576 794L538 838L541 844L523 853L523 835L532 834Z" fill="#f6383e" />
      </svg>
    </div>
  );
}
